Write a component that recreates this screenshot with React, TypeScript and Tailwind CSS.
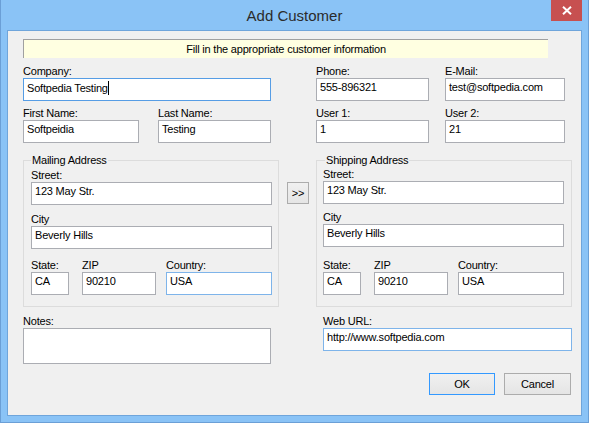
import React from "react";

const INPUT_BASE =
  "h-[23px] bg-white border px-[3px] pt-[2px] leading-[13px] whitespace-nowrap overflow-hidden";

type Tone = "normal" | "focus" | "hover";

function Box({
  value,
  w,
  tone = "normal",
  caret = false,
}: {
  value: string;
  w: string;
  tone?: Tone;
  caret?: boolean;
}) {
  const border =
    tone === "focus"
      ? "border-[#569de5]"
      : tone === "hover"
      ? "border-[#7eb4ea]"
      : "border-[#abadb3]";
  return (
    <div className={`${INPUT_BASE} ${border} ${w}`}>
      {value}
      {caret && <span className="inline-block w-px h-[14px] bg-black align-[-3px]" />}
    </div>
  );
}

function Label({ children, className = "" }: { children: React.ReactNode; className?: string }) {
  return <div className={`h-[13px] leading-[13px] whitespace-nowrap ${className}`}>{children}</div>;
}

function Field({
  label,
  value,
  w,
  tone,
  className = "",
}: {
  label: string;
  value: string;
  w: string;
  tone?: Tone;
  className?: string;
}) {
  return (
    <div className={`flex flex-col ${className}`}>
      <Label>{label}</Label>
      <Box value={value} w={w} tone={tone} />
    </div>
  );
}

function Address({
  title,
  padL,
  legendMl,
  padT,
  cityMt,
  stateMt,
  countryTone,
}: {
  title: string;
  padL: string;
  legendMl: string;
  padT: string;
  cityMt: string;
  stateMt: string;
  countryTone: Tone;
}) {
  return (
    <fieldset className="mt-[11px] border border-[#dcdcdc] w-[256px] min-w-0">
      <legend className={`${legendMl} px-[1px] leading-[13px]`}>{title}</legend>
      <div className={`flex flex-col ${padL} ${padT} pb-[11px]`}>
        <Field label="Street:" value="123 May Str." w="w-[241px]" />
        <Field label="City" value="Beverly Hills" w="w-[241px]" className={cityMt} />
        <div className={`flex ${stateMt}`}>
          <Field label="State:" value="CA" w="w-[38px]" />
          <Field label="ZIP" value="90210" w="w-[74px]" className="ml-[13px]" />
          <Field label="Country:" value="USA" w="w-[106px]" tone={countryTone} className="ml-[10px]" />
        </div>
      </div>
    </fieldset>
  );
}

function Button({ children, w, isDefault = false }: { children: React.ReactNode; w: string; isDefault?: boolean }) {
  return (
    <div
      className={`h-[22px] ${w} flex items-center justify-center border bg-gradient-to-b from-[#f0f0f0] to-[#e5e5e5] ${
        isDefault ? "border-[#3399ff]" : "border-[#acacac]"
      }`}
    >
      {children}
    </div>
  );
}

export default function App() {
  return (
    <div className="w-[589px] h-[423px] flex flex-col bg-[#8ac3f6] border-x border-b border-[#6b9fd6] font-['Liberation_Sans',Arial,sans-serif]">
      {/* Title bar */}
      <div className="h-[30px] shrink-0 grid grid-cols-[1fr_auto_1fr]">
        <div />
        <div className="text-[15px] text-[#2b2b2b] leading-[30px] pt-[1px]">Add Customer</div>
        <div className="flex justify-end items-start">
          <div className="mr-[6px] w-[31px] h-[21px] bg-[#c75050] flex items-center justify-center">
            <svg width="10" height="9" viewBox="0 0 10 9">
              <path d="M1 0.8 L9 8.2 M9 0.8 L1 8.2" stroke="white" strokeWidth="2" strokeLinecap="butt" />
            </svg>
          </div>
        </div>
      </div>

      {/* Client area */}
      <div className="mx-[6px] h-[386px] border border-[#6fa5db] bg-[#f0f0f0] text-[11px] tracking-[-0.2px] text-black pl-[15px] pt-[8px]">
        <div className="w-[525px] h-[19px] bg-[#ffffe1] border-t border-l border-[#a0a0a0] flex items-center justify-center leading-[13px]">
          Fill in the appropriate customer information
        </div>

        <div className="flex mt-[7px]">
          {/* Left column */}
          <div className="w-[256px] flex flex-col">
            <Label>Company:</Label>
            <Box value="Softpedia Testing" w="w-[248px]" tone="focus" caret />
            <div className="flex mt-[6px]">
              <Field label="First Name:" value="Softpeidia" w="w-[116px]" />
              <Field label="Last Name:" value="Testing" w="w-[113px]" className="ml-[19px]" />
            </div>
            <Address
              title="Mailing Address"
              padL="pl-[7px]"
              legendMl="ml-[7px]"
              padT="pt-[2px]"
              cityMt="mt-[8px]"
              stateMt="mt-[10px]"
              countryTone="hover"
            />
            <div className="flex flex-col mt-[8px]">
              <Label>Notes:</Label>
              <div className="w-[248px] h-[36px] bg-white border border-[#abadb3]" />
            </div>
          </div>

          {/* Copy button */}
          <div className="ml-[8px] mt-[117px] self-start">
            <Button w="w-[22px]">&gt;&gt;</Button>
          </div>

          {/* Right column */}
          <div className="ml-[7px] w-[256px] flex flex-col">
            <div className="flex">
              <Field label="Phone:" value="555-896321" w="w-[113px]" />
              <Field label="E-Mail:" value="test@softpedia.com" w="w-[120px]" className="ml-[16px]" />
            </div>
            <div className="flex mt-[6px]">
              <Field label="User 1:" value="1" w="w-[113px]" />
              <Field label="User 2:" value="21" w="w-[120px]" className="ml-[16px]" />
            </div>
            <Address
              title="Shipping Address"
              padL="pl-[6px]"
              legendMl="ml-[8px]"
              padT="pt-[1px]"
              cityMt="mt-[7px]"
              stateMt="mt-[12px]"
              countryTone="normal"
            />
            <div className="flex flex-col mt-[8px] ml-[7px]">
              <Label>Web URL:</Label>
              <Box value="http://www.softpedia.com" w="w-[249px]" tone="hover" />
            </div>
            <div className="flex justify-end gap-[9px] pr-[1px] mt-[22px]">
              <Button w="w-[66px]" isDefault>
                OK
              </Button>
              <Button w="w-[67px]">Cancel</Button>
            </div>
          </div>
        </div>
      </div>
    </div>
  );
}
